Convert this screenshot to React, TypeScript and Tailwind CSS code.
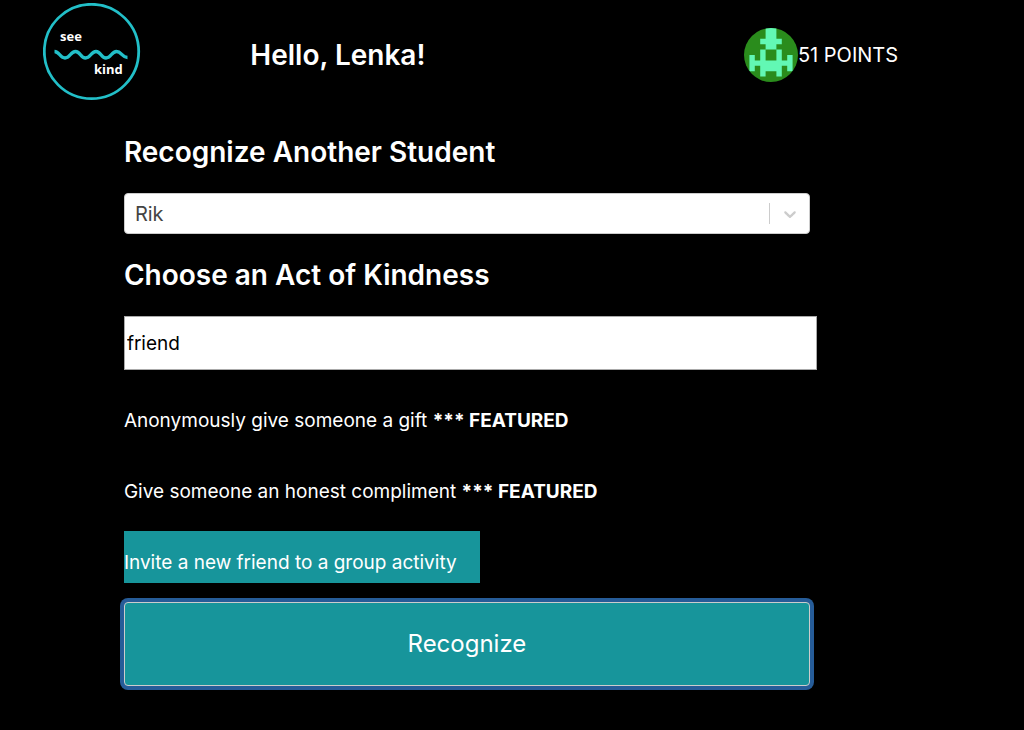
import { useState } from 'react';
import type { FormEvent } from 'react';

const students = ['Rik', 'Lenka'];

const acts = [
  { id: 1, title: 'Anonymously give someone a gift', featured: true },
  { id: 2, title: 'Give someone an honest compliment', featured: true },
  { id: 3, title: 'Invite a new friend to a group activity', featured: false },
];

const Logo = () => (
  <svg viewBox="0 0 98 98" className="size-[98px]" role="img" aria-label="see kind">
    <circle cx="48.5" cy="48.5" r="47.2" fill="none" stroke="#22bfc8" strokeWidth="2.8" />
    <path
      d="M11.5 48.5 C16.5 48.5 17 55 22 55 S27.5 48.5 32.5 48.5 S37.5 55 42.5 55 S48 48.5 53 48.5 S58 55 63 55 S68.5 48.5 73.5 48.5 S79 54.5 84.5 54.5"
      fill="none"
      stroke="#22bfc8"
      strokeWidth="3.4"
    />
    <text x="17" y="38" fill="#fff" fontSize="13" fontWeight="700" fontFamily="Open Sans, sans-serif">
      see
    </text>
    <text x="51" y="71" fill="#fff" fontSize="13" fontWeight="700" fontFamily="Open Sans, sans-serif">
      kind
    </text>
  </svg>
);

const Avatar = () => (
  <svg viewBox="0 0 10 10" className="size-[54px] rounded-full bg-[#2a8c1c]" aria-hidden="true">
    <path
      d="M4 0h2v2h1v1h-1v1h1v2h1v-1h1v3h-1v-1h-1v2h-1v-1h-2v1h-1v-2h-1v1h-1v-3h1v1h1v-2h1v-1h-1v-1h1z M4 4h2v2h-2z"
      fill="#62f8b4"
      fillRule="evenodd"
    />
  </svg>
);

const App = () => {
  const [student, setStudent] = useState('Rik');
  const [search, setSearch] = useState('friend');
  const [selectedAct, setSelectedAct] = useState(3);

  const handleSubmit = (e: FormEvent) => {
    e.preventDefault();
  };

  return (
    <div className="min-h-screen bg-black font-['Inter',sans-serif] text-white">
      <header className="flex min-h-[110px] items-center">
        <a href="#" className="flex w-[18%] justify-center self-start pt-[3px]">
          <Logo />
        </a>
        <h1 className="w-[30%] text-center text-[28px] leading-9 font-semibold">Hello, Lenka!</h1>
        <div className="mr-[12.3%] ml-auto flex items-center">
          <Avatar />
          <span className="text-xl">51 POINTS</span>
        </div>
      </header>

      <form onSubmit={handleSubmit} className="ml-[12.1%] w-[67%] pt-6">
        <label htmlFor="student" className="block text-[28px] leading-9 font-semibold">
          Recognize Another Student
        </label>
        <div className="relative mt-[23px]">
          <select
            id="student"
            value={student}
            onChange={(e) => setStudent(e.target.value)}
            className="block h-[41px] w-full appearance-none rounded border border-[#ccc] bg-white px-[10px] text-xl text-[#444]"
          >
            {students.map((name) => (
              <option key={name}>{name}</option>
            ))}
          </select>
          <div className="pointer-events-none absolute inset-y-[10px] right-0 flex w-[41px] items-center justify-center border-l border-[#ccc]">
            <svg viewBox="0 0 20 20" className="size-5" fill="#ccc" aria-hidden="true">
              <path d="M4.516 7.548c0.436-0.446 1.043-0.481 1.576 0l3.908 3.747 3.908-3.747c0.533-0.481 1.141-0.446 1.574 0 0.436 0.445 0.408 1.197 0 1.615-0.406 0.418-4.695 4.502-4.695 4.502-0.217 0.223-0.502 0.335-0.787 0.335s-0.57-0.112-0.789-0.335c0 0-4.287-4.084-4.695-4.502s-0.436-1.17 0-1.615z" />
            </svg>
          </div>
        </div>

        <label htmlFor="act" className="mt-[23px] block text-[28px] leading-9 font-semibold">
          Choose an Act of Kindness
        </label>
        <input
          id="act"
          type="text"
          value={search}
          onChange={(e) => setSearch(e.target.value)}
          className="mt-[23px] block h-[54px] w-[101%] border border-[#aaa] bg-white px-[2px] text-[19px] text-black"
        />

        <ul className="mt-[19px] flex flex-col items-start gap-[19px]">
          {acts.map((act) => (
            <li key={act.id}>
              <button
                type="button"
                onClick={() => setSelectedAct(act.id)}
                className={`block pt-[18px] pr-[23px] pb-[6px] text-left text-[19px] leading-7 ${
                  selectedAct === act.id ? 'bg-[#17959b]' : ''
                }`}
              >
                {act.title}
                {act.featured && (
                  <>
                    {' '}
                    <strong className="font-bold">*** FEATURED</strong>
                  </>
                )}
              </button>
            </li>
          ))}
        </ul>

        <button
          type="submit"
          className="mt-[19px] block h-[84px] w-full rounded border border-[#ccc] bg-[#17959b] text-2xl ring-4 ring-[#265c98]"
        >
          Recognize
        </button>
      </form>
    </div>
  );
};

export default App;
